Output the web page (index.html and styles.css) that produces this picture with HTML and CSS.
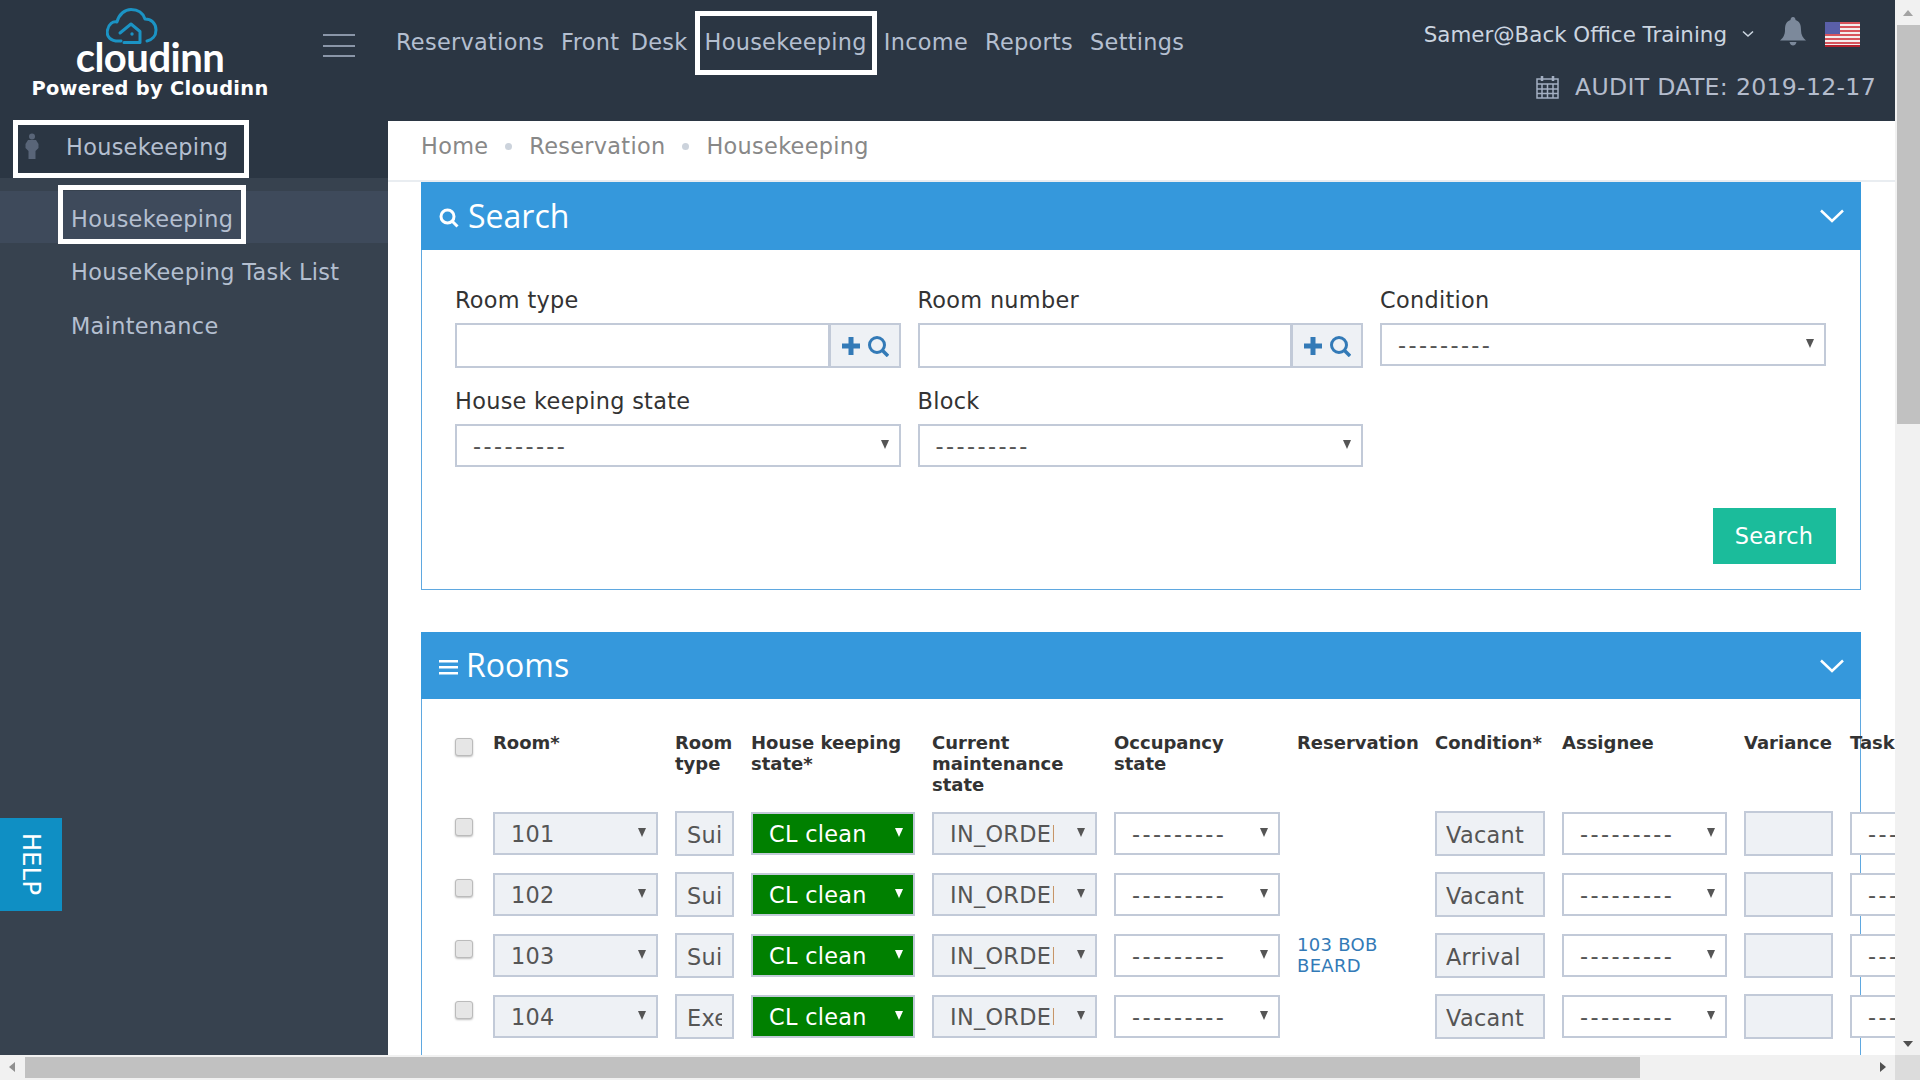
FILE: index.html
```html
<!DOCTYPE html>
<html lang="en">
<head>
  <meta charset="UTF-8" />
  <title>Housekeeping</title>
  <link rel="stylesheet" href="styles.css">
</head>
<body>
<div class="window">
  <div class="viewport">
    <header class="topbar">
      <div class="brand">
        <svg class="cloud" width="52" height="38" viewBox="0 0 52 38" fill="none" stroke="#1b93c4" stroke-width="3" stroke-linecap="round" stroke-linejoin="round">
          <path d="M15 33 C4 34 0 28 1.500 22 C2.500 16 7 13 11 14 C13 6 19 1.500 25 1.500 C32 1.500 37 5 39 11 C45 11 50 15 50 22 C50 28 46 32 41 33"/>
          <path d="M14 25 L25 16 L34 23.500 L34 34.500 L18 34.500"/>
          <circle cx="26" cy="26" r="1.700" fill="#1b93c4" stroke="none"/>
        </svg>
        <div class="brand-name">cloudinn</div>
        <div class="brand-sub">Powered by Cloudinn</div>
      </div>
      <div class="burger"><span></span><span></span><span></span></div>
      <nav class="mainnav">
        <a>Reservations</a>
        <a>Front Desk</a>
        <a class="boxed">Housekeeping</a>
        <a>Income</a>
        <a>Reports</a>
        <a>Settings</a>
      </nav>
      <div class="usertools">
        <div class="userline">
          <span class="username">Samer@Back Office Training</span>
          <svg class="chev" width="12" height="8" viewBox="0 0 12 8" fill="none" stroke="#cbd5e0" stroke-width="1.6"><path d="M1 1.500 L6 6 L11 1.500"/></svg>
          <svg class="bell" width="26" height="29" viewBox="0 0 26 29" fill="#7c899b"><path d="M13 0 C15 0 15.500 2 15.500 3 C20 4.500 21 8 21 13 C21 18 23 21 26 23.500 L0 23.500 C3 21 5 18 5 13 C5 8 6 4.500 10.500 3 C10.500 2 11 0 13 0 Z"/><path d="M9.500 25 L16.500 25 C16 27.500 14.500 28.500 13 28.500 C11.500 28.500 10 27.500 9.500 25 Z"/></svg>
          <svg class="flag" width="35" height="25" viewBox="0 0 35 25">
            <rect width="35" height="25" fill="#f4eeee"/>
            <g fill="#d8545c"><rect y="0" width="35" height="2"/><rect y="4" width="35" height="2"/><rect y="8" width="35" height="2"/><rect y="12" width="35" height="2"/><rect y="16" width="35" height="2"/><rect y="20" width="35" height="2"/></g>
            <rect y="23" width="35" height="2" fill="#b3202c"/>
            <rect width="15" height="12" fill="#5a5fa8"/>
          </svg>
        </div>
        <div class="auditline">
          <svg width="23" height="24" viewBox="0 0 23 24" fill="none" stroke="#a3afc2" stroke-width="1.500"><rect x="1" y="4" width="21" height="19"/><path d="M1 9 H22 M1 14 H22 M1 18.500 H22 M6 9 V23 M11.500 9 V23 M17 9 V23"/><path d="M6 1 V6 M17 1 V6" stroke-width="2.500"/></svg>
          <span>AUDIT DATE: 2019-12-17</span>
        </div>
      </div>
    </header>

    <div class="below">
      <aside class="sidebar">
        <div class="side-head">
          <div class="side-title">
            <svg width="14" height="27" viewBox="0 0 14 27" fill="#596578"><circle cx="7" cy="3.500" r="3"/><path d="M3 7 H11 L13.500 11 V15 L10.500 18 V26 H3.500 V18 L0.500 15 V11 Z"/></svg>
            <span>Housekeeping</span>
          </div>
        </div>
        <div class="side-list">
          <div class="side-active"><a class="boxed">Housekeeping</a></div>
          <a class="side-item">HouseKeeping Task List</a>
          <a class="side-item">Maintenance</a>
        </div>
      </aside>

      <main class="content">
        <div class="crumbs">
          <a>Home</a><i></i><a>Reservation</a><i></i><a>Housekeeping</a>
        </div>

        <section class="panel panel-search">
          <div class="panel-head">
            <svg class="head-icon" width="20" height="20" viewBox="0 0 20 20" fill="none" stroke="#fff" stroke-width="3"><circle cx="8.500" cy="8.500" r="6.500"/><path d="M13 13 L18.500 18.500"/></svg>
            <h2>Search</h2>
            <svg class="collapse" width="24" height="14" viewBox="0 0 24 14" fill="none" stroke="#fff" stroke-width="2.500"><path d="M1 1.500 L12 12 L23 1.500"/></svg>
          </div>
          <form class="search-form">
            <div class="field">
              <label>Room type</label>
              <div class="lookup">
                <input type="text" />
                <span class="addon">
                  <svg width="48" height="22" viewBox="0 0 48 22" fill="none" stroke="#337ab7"><path d="M10 2 V20 M1 11 H19" stroke-width="5"/><circle cx="36" cy="10" r="7.500" stroke-width="3"/><path d="M41 15 L47 21" stroke-width="3.500"/></svg>
                </span>
              </div>
            </div>
            <div class="field">
              <label>Room number</label>
              <div class="lookup">
                <input type="text" />
                <span class="addon">
                  <svg width="48" height="22" viewBox="0 0 48 22" fill="none" stroke="#337ab7"><path d="M10 2 V20 M1 11 H19" stroke-width="5"/><circle cx="36" cy="10" r="7.500" stroke-width="3"/><path d="M41 15 L47 21" stroke-width="3.500"/></svg>
                </span>
              </div>
            </div>
            <div class="field">
              <label>Condition</label>
              <div class="sel"><select class="dash"><option>---------</option></select></div>
            </div>
            <div class="field">
              <label>House keeping state</label>
              <div class="sel"><select class="dash"><option>---------</option></select></div>
            </div>
            <div class="field">
              <label>Block</label>
              <div class="sel"><select class="dash"><option>---------</option></select></div>
            </div>
            <div class="form-actions"><button type="button" class="btn-search">Search</button></div>
          </form>
        </section>

        <section class="panel panel-rooms">
          <div class="panel-head">
            <svg class="head-icon" width="20" height="16" viewBox="0 0 20 16" fill="#fff"><rect y="1" width="19" height="2.500"/><rect y="7" width="19" height="2.500"/><rect y="13" width="19" height="2.500"/></svg>
            <h2>Rooms</h2>
            <svg class="collapse" width="24" height="14" viewBox="0 0 24 14" fill="none" stroke="#fff" stroke-width="2.500"><path d="M1 1.500 L12 12 L23 1.500"/></svg>
          </div>
          <table class="rooms">
            <colgroup>
              <col class="c-check"><col class="c-room"><col class="c-type"><col class="c-state"><col class="c-maint"><col class="c-occ">
              <col class="c-res"><col class="c-cond"><col class="c-assign"><col class="c-var"><col class="c-task">
            </colgroup>
            <thead>
              <tr>
                <th><input type="checkbox" class="tick" /></th>
                <th>Room*</th>
                <th>Room type</th>
                <th>House keeping state*</th>
                <th>Current maintenance state</th>
                <th>Occupancy state</th>
                <th>Reservation</th>
                <th>Condition*</th>
                <th>Assignee</th>
                <th>Variance</th>
                <th>Task</th>
              </tr>
            </thead>
            <tbody>
              <tr>
                <td><input type="checkbox" class="tick" /></td>
                <td><div class="sel muted"><select><option>101</option></select></div></td>
                <td><input class="box" value="Suite" /></td>
                <td><div class="sel clean"><select><option>CL clean</option></select></div></td>
                <td><div class="sel muted"><select class="clip"><option>IN_ORDER</option></select></div></td>
                <td><div class="sel"><select class="dash"><option>---------</option></select></div></td>
                <td></td>
                <td><input class="box" value="Vacant" /></td>
                <td><div class="sel"><select class="dash"><option>---------</option></select></div></td>
                <td><input class="box" /></td>
                <td><div class="sel"><select class="dash"><option>---------</option></select></div></td>
              </tr>
              <tr>
                <td><input type="checkbox" class="tick" /></td>
                <td><div class="sel muted"><select><option>102</option></select></div></td>
                <td><input class="box" value="Suite" /></td>
                <td><div class="sel clean"><select><option>CL clean</option></select></div></td>
                <td><div class="sel muted"><select class="clip"><option>IN_ORDER</option></select></div></td>
                <td><div class="sel"><select class="dash"><option>---------</option></select></div></td>
                <td></td>
                <td><input class="box" value="Vacant" /></td>
                <td><div class="sel"><select class="dash"><option>---------</option></select></div></td>
                <td><input class="box" /></td>
                <td><div class="sel"><select class="dash"><option>---------</option></select></div></td>
              </tr>
              <tr>
                <td><input type="checkbox" class="tick" /></td>
                <td><div class="sel muted"><select><option>103</option></select></div></td>
                <td><input class="box" value="Suite" /></td>
                <td><div class="sel clean"><select><option>CL clean</option></select></div></td>
                <td><div class="sel muted"><select class="clip"><option>IN_ORDER</option></select></div></td>
                <td><div class="sel"><select class="dash"><option>---------</option></select></div></td>
                <td><a class="res-link">103 BOB BEARD</a></td>
                <td><input class="box" value="Arrival" /></td>
                <td><div class="sel"><select class="dash"><option>---------</option></select></div></td>
                <td><input class="box" /></td>
                <td><div class="sel"><select class="dash"><option>---------</option></select></div></td>
              </tr>
              <tr>
                <td><input type="checkbox" class="tick" /></td>
                <td><div class="sel muted"><select><option>104</option></select></div></td>
                <td><input class="box" value="Executive" /></td>
                <td><div class="sel clean"><select><option>CL clean</option></select></div></td>
                <td><div class="sel muted"><select class="clip"><option>IN_ORDER</option></select></div></td>
                <td><div class="sel"><select class="dash"><option>---------</option></select></div></td>
                <td></td>
                <td><input class="box" value="Vacant" /></td>
                <td><div class="sel"><select class="dash"><option>---------</option></select></div></td>
                <td><input class="box" /></td>
                <td><div class="sel"><select class="dash"><option>---------</option></select></div></td>
              </tr>
            </tbody>
          </table>
        </section>
      </main>
    </div>

    <a class="help-tab">HELP</a>
  </div>

  <div class="scroll-v">
    <span class="arrow up"></span>
    <span class="thumb"></span>
    <span class="arrow down"></span>
  </div>
  <div class="scroll-h">
    <span class="arrow left"></span>
    <span class="thumb"></span>
    <span class="arrow right"></span>
  </div>
  <div class="scroll-corner"></div>
</div>
</body>
</html>
```

FILE: styles.css
```css
* {
  box-sizing: border-box;
}
html, body {
  margin: 0;
  height: 100%;
  overflow: hidden;
}
body {
  font-family: "DejaVu Sans", sans-serif;
  font-size: 22.4px;
  letter-spacing: 0.3px;
  color: #333;
  background: #fff;
}
.window {
  display: grid;
  grid-template-columns: 1fr 25px;
  grid-template-rows: 1fr 25px;
  width: 1920px;
  height: 1080px;
}
.viewport {
  position: relative;
  overflow: hidden;
  display: flex;
  flex-direction: column;
  min-width: 0;
}

/* top bar */
.topbar {
  flex: none;
  display: flex;
  height: 121px;
  background: #2b3643;
}
.brand {
  flex: none;
  width: 300px;
  display: flex;
  flex-direction: column;
  align-items: center;
}
.cloud {
  flex: none;
  margin: 8px 36px 0 0;
}
.brand-name {
  margin-top: -7px;
  font-family: Lato, sans-serif;
  font-size: 40px;
  line-height: 36px;
  font-weight: 700;
  color: #fff;
  letter-spacing: -0.5px;
}
.brand-sub {
  margin-top: 1px;
  font-size: 19.400px;
  line-height: 26px;
  font-weight: 700;
  color: #fff;
  white-space: nowrap;
}
.burger {
  flex: none;
  width: 32px;
  margin: 34px 0 0 23px;
}
.burger span {
  display: block;
  height: 2px;
  margin-bottom: 8.500px;
  background: #8a96a8;
}
.mainnav {
  display: flex;
  gap: 17px;
  margin-left: 41px;
  align-items: flex-start;
  word-spacing: 4px;
}
.mainnav a {
  color: #b4bfd0;
  line-height: 30px;
  margin-top: 27px;
  white-space: nowrap;
}
.boxed {
  border: 5px solid #fff;
}
.mainnav a.boxed {
  margin: 11px -10px 0;
  padding: 11px 5px 13px;
  line-height: 30px;
}
.usertools {
  margin-left: auto;
  padding-right: 19px;
  display: flex;
  flex-direction: column;
  align-items: flex-end;
}
.userline {
  display: flex;
  align-items: center;
  height: 30px;
  margin: 19px 16px 0 0;
  color: #cbd5e0;
}
.username {
  font-size: 21.400px;
  letter-spacing: 0;
  white-space: nowrap;
}
.chev {
  margin-left: 15px;
}
.bell {
  margin: -6px 0 0 26px;
}
.flag {
  margin-left: 19px;
}
.auditline {
  display: flex;
  align-items: center;
  gap: 16px;
  margin-top: 23px;
  color: #b4bccc;
  font-size: 23.600px;
  line-height: 30px;
  white-space: nowrap;
}

/* sidebar */
.below {
  flex: 1;
  display: flex;
  min-height: 0;
}
.sidebar {
  flex: none;
  width: 388px;
  background: #37424f;
  color: #b4bfd0;
}
.side-head {
  height: 58px;
  background: #2b3643;
}
.side-title {
  display: flex;
  align-items: center;
  gap: 27px;
  width: 236px;
  height: 58px;
  margin: -1px 0 0 13px;
  padding: 0 0 5px 7px;
  border: 5px solid #fff;
}
.side-list {
  padding-top: 13px;
}
.side-active {
  height: 52px;
  margin-bottom: 2px;
  background: #3e4a5b;
}
.side-active .boxed {
  display: block;
  width: 188px;
  height: 59px;
  margin-left: 58px;
  position: relative;
  top: -6px;
  padding: 14px 0 0 8px;
  line-height: 30px;
}
.side-item {
  display: block;
  height: 54px;
  padding-left: 71px;
  line-height: 54px;
}

/* main column */
.content {
  flex: 1;
  min-width: 0;
}
.crumbs {
  display: flex;
  align-items: center;
  height: 61px;
  padding: 0 0 9px 33px;
  border-bottom: 2px solid #e9edf1;
  color: #888;
}
.crumbs i {
  width: 7px;
  height: 7px;
  margin: 0 17px;
  border-radius: 50%;
  background: #ccd3dc;
}
.panel {
  margin: 0 34px 42px 33px;
  border: 1px solid #5fa8e0;
  border-top: 0;
}
.panel-head {
  display: flex;
  align-items: center;
  gap: 9px;
  height: 68px;
  margin: 0 -1px;
  padding: 0 17px 2px 18px;
  background: #3598dc;
  color: #fff;
}
.panel-head h2 {
  margin: 0;
  font-family: "Open Sans", sans-serif;
  font-size: 32px;
  font-weight: 400;
  letter-spacing: 0;
}
.head-icon {
  margin-top: 5px;
}
.panel-rooms .panel-head {
  gap: 7px;
  height: 67px;
}
.collapse {
  margin: 2px 0 0 auto;
}

/* search form */
.panel-search {
  height: 408px;
}
.search-form {
  display: grid;
  grid-template-columns: repeat(3, 445.500px);
  column-gap: 17px;
  row-gap: 18px;
  padding: 35px 0 0 33px;
}
.field label {
  display: block;
  height: 30px;
  margin-bottom: 8px;
  line-height: 30px;
  color: #333;
}
.lookup {
  display: flex;
  height: 45px;
  border: 2px solid #c2cad8;
}
.lookup input {
  flex: 1;
  min-width: 0;
  border: 0;
  outline: 0;
}
.addon {
  flex: none;
  width: 71px;
  display: flex;
  align-items: center;
  justify-content: center;
  border-left: 3px solid #c2cad8;
  background: #eef1f5;
}
.form-actions {
  grid-column: 1 / -1;
  display: flex;
  justify-content: flex-end;
  margin-right: -10px;
  padding-top: 23px;
}
.btn-search {
  width: 123px;
  height: 56px;
  border: 0;
  background: #1bbc9b;
  color: #fff;
  font: inherit;
  letter-spacing: inherit;
}

/* selects */
.sel {
  position: relative;
  height: 43px;
  border: 2px solid #c2cad8;
  background: #fff;
}
.sel select {
  display: block;
  width: 100%;
  height: 100%;
  padding: 0 28px 0 16px;
  border: 0;
  outline: 0;
  appearance: none;
  background: transparent;
  font: inherit;
  letter-spacing: inherit;
  color: #555;
}
.sel select.dash {
  letter-spacing: 2.400px;
  padding-top: 1px;
}
.sel select.clip {
  padding-right: 41px;
}
.sel::after {
  content: "";
  position: absolute;
  top: 14px;
  right: 10px;
  border-style: solid;
  border-width: 9px 4.500px 0;
  border-color: #555 transparent transparent;
  pointer-events: none;
}
.sel.muted {
  background: #eef1f5;
}
.sel.clean {
  background: #008000;
}
.sel.clean select {
  color: #fff;
}
.sel.clean::after {
  border-top-color: #fff;
}

/* rooms table */
.rooms {
  table-layout: fixed;
  width: 1577px;
  margin: 33px 0 0 33px;
  border-collapse: collapse;
}
.c-check { width: 38px; }
.c-room { width: 182px; }
.c-type { width: 76px; }
.c-state { width: 181px; }
.c-maint { width: 182px; }
.c-occ { width: 183px; }
.c-res { width: 138px; }
.c-cond { width: 127px; }
.c-assign { width: 182px; }
.c-var { width: 106px; }
.c-task { width: 182px; }
.rooms th {
  height: 80px;
  padding: 0 17px 16px 0;
  vertical-align: top;
  text-align: left;
  font-size: 18px;
  line-height: 21px;
  letter-spacing: 0;
  color: #333;
}
.rooms th:nth-child(7), .rooms th:nth-child(8), .rooms th:nth-child(10) {
  padding-right: 0;
  white-space: nowrap;
}
.rooms td {
  height: 61px;
  padding: 0 17px 0 0;
  vertical-align: top;
}
.rooms th:first-child .tick {
  margin-top: 6px;
}
.rooms td:first-child .tick {
  margin-top: 6px;
}
.tick {
  display: block;
  width: 18px;
  height: 18px;
  margin: 0;
  appearance: none;
  border: 1px solid #bbb;
  border-radius: 3px;
  background: #e6e6e6;
  box-shadow: 0 1px 2px rgba(0, 0, 0, 0.25);
}
.box {
  display: block;
  width: 100%;
  height: 45px;
  margin-top: -1px;
  padding: 2px 9px 0;
  border: 2px solid #c2cad8;
  outline: 0;
  background: #eef1f5;
  font: inherit;
  letter-spacing: inherit;
  color: #555;
}
.rooms td:nth-child(3) .box {
  padding: 2px 10px 0 10px;
}
.res-link {
  display: block;
  font-size: 18px;
  line-height: 21px;
  color: #337ab7;
}

/* floating help */
.help-tab {
  position: absolute;
  left: 0;
  top: 818px;
  display: flex;
  align-items: center;
  justify-content: center;
  width: 62px;
  height: 93px;
  background: #0f8fc4;
  color: #fff;
  font-size: 24px;
  writing-mode: vertical-rl;
}

/* page scrollbars */
.scroll-v, .scroll-h {
  display: flex;
  background: #f1f1f1;
}
.scroll-v {
  flex-direction: column;
  align-items: stretch;
  padding-left: 2px;
}
.scroll-h {
  padding: 2px 0;
}
.scroll-corner {
  background: #dcdcdc;
}
.arrow {
  flex: none;
  position: relative;
  width: 25px;
  height: 25px;
}
.scroll-v .arrow {
  width: auto;
}
.arrow::after {
  content: "";
  position: absolute;
  border-style: solid;
  border-color: transparent;
}
.arrow.up::after {
  left: 6px;
  top: 10px;
  border-width: 0 5px 6px;
  border-bottom-color: #a3a3a3;
}
.arrow.down::after {
  left: 6px;
  bottom: 8px;
  border-width: 6px 5px 0;
  border-top-color: #505050;
}
.arrow.left::after {
  left: 9px;
  top: 5px;
  border-width: 5px 6px 5px 0;
  border-right-color: #8f8f8f;
}
.arrow.right::after {
  right: 9px;
  top: 5px;
  border-width: 5px 0 5px 6px;
  border-left-color: #505050;
}
.scroll-v .thumb {
  flex: none;
  height: 399px;
  background: #c1c1c1;
}
.scroll-v .arrow.down {
  margin-top: auto;
}
.scroll-h .thumb {
  flex: none;
  width: 1615px;
  background: #c1c1c1;
}
.scroll-h .arrow.right {
  margin-left: auto;
}
```
